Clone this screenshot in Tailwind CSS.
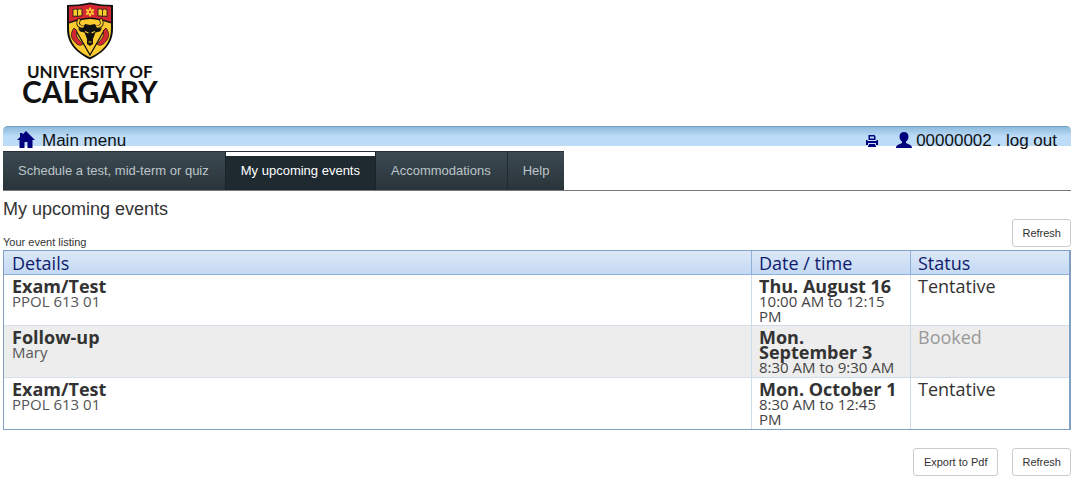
<!DOCTYPE html>
<html lang="en">
<head>
<meta charset="utf-8">
<meta name="viewport" content="width=device-width, initial-scale=1">
<title>My upcoming events</title>
<script src="https://cdn.jsdelivr.net/npm/@tailwindcss/browser@4"></script>
</head>
<body class="bg-white pl-[3px] pr-2 font-['Liberation_Sans',Arial,sans-serif] text-[#333]">
<header>
  <div class="h-[126px] w-max pl-[19px] pt-[2px] font-[Lato,sans-serif] font-bold text-[#111]">
    <svg class="mx-auto block h-[58px] w-[48px]" viewBox="0 0 48 58" role="img" aria-label="University crest">
      <path d="M1 3Q13 3 24 .5Q35 3 47 3V27C47 42 37 51 24 57.500C11 51 1 42 1 27Z" fill="#111"/>
      <path d="M3 4.500Q14 4.500 24 2.300Q34 4.500 45 4.500V20Q34 16 24 15.500Q14 16 3 20Z" fill="#d32732"/>
      <path d="M3 21.500Q14 17.500 24 17Q34 17.500 45 21.500V27C45 41 36.500 49.500 24 55.300C11.500 49.500 3 41 3 27Z" fill="#fccb2f"/>
      <g fill="#fccb2f" stroke="#111" stroke-width=".8">
        <path d="M7 7.500Q9.500 6.500 11.500 7.500Q13.500 6.500 16 7V14Q13.500 13.500 11.500 14.500Q9.500 13.500 7 14.500ZM11.500 7.500V14.500"/>
        <path d="M32 7Q34.500 6.500 36.500 7.500Q38.500 6.500 41 7.500V14.500Q38.500 13.500 36.500 14.500Q34.500 13.500 32 14ZM36.500 7.500V14.500"/>
      </g>
      <g stroke="#fccb2f" stroke-width="2.200" stroke-linecap="round"><path d="M24 6.500V13.500M21 8.200L27 11.800M27 8.200L21 11.800"/></g>
      <circle cx="24" cy="10" r="1.200" fill="#d32732"/>
      <path d="M9 27L24 53L39 27" fill="none" stroke="#111" stroke-width="1.300"/>
      <g fill="#d32732" stroke="#111" stroke-width=".7">
        <path d="M8 26L11 29C9 34 12 37 17 42C14 45 10 42 8 39C4 35 5 30 8 26Z"/>
        <path d="M40 26L37 29C39 34 36 37 31 42C34 45 38 42 40 39C44 35 43 30 40 26Z"/>
      </g>
      <path d="M15 31L24 49L33 31Z" fill="#fccb2f"/>
      <path d="M13 18C10.500 23.500 14 25.500 19 25.500H29C34 25.500 37.500 23.500 35 18" fill="none" stroke="#111" stroke-width="3.400" stroke-linecap="round"/>
      <path d="M13 18C10.500 23.500 14 25 18.500 25M35 18C37.500 23.500 34 25 29.500 25" fill="none" stroke="#fccb2f" stroke-width="1.900" stroke-linecap="round"/>
      <path d="M19 22L24 23L29 22L31 26L36 26.500L34 29.500L29.500 30.500L27 37V42L24 44L21 42V37L18.500 30.500L14 29.500L12 26.500L17 26Z" fill="#111"/>
      <path d="M19 29.500L22.500 31M29 29.500L25.500 31M22.500 40H25.500" stroke="#fccb2f" stroke-width="1.100"/>
    </svg>
    <p class="mt-1 text-center text-[17px] leading-4">UNIVERSITY OF</p>
    <p class="text-center text-[30px] leading-[23px]">CALGARY</p>
  </div>
  <div class="flex h-5 justify-between rounded-t-[5px] border-t border-[#6f9fc0] bg-linear-to-b from-[#8fbbdc] to-[#bcdcf8] to-50% pl-[14px] pr-[14px] text-[17px] leading-7 text-[#111]">
    <a href="#" class="flex h-7 items-center gap-[7px]">
      <svg class="mb-[3px] h-[17px] w-[18px]" viewBox="0 0 18 17" fill="#00007f" aria-hidden="true"><path d="M9 0L18 9H15.500V17H10.500V11H7.500V17H2.500V9H0L3 6V2H5.500V3.500Z"/></svg>
      Main menu</a>
    <div class="flex h-7 items-center">
      <a href="#" aria-label="Print" class="mr-[18px]"><svg class="h-3 w-3" viewBox="0 0 12 12" fill="#00007f" aria-hidden="true"><path fill-rule="evenodd" d="M2.500 0H8.500L9.500 1.500V5H2.500ZM4 1.500V3.500H8V1.500ZM0 5H1.500V6H10.500V5H12V10H10V8H2V10H0ZM3 9H9V10.500H10V12H2V10.500H3Z"/></svg></a>
      <svg class="mb-[3px] mr-1 h-4 w-4" viewBox="0 0 16 16" fill="#00007f" aria-hidden="true"><path d="M8 0C10.800 0 12.500 2 12.500 4.500C12.500 7 11.500 8.500 10 9.500V11C12 12.300 16 12.500 16 16H0C0 12.500 4 12.300 6 11V9.500C4.500 8.500 3.500 7 3.500 4.500C3.500 2 5.200 0 8 0Z"/></svg>
      <span class="whitespace-pre">00000002 . </span><a href="#">log out</a>
    </div>
  </div>
</header>
<nav class="mt-[5px] flex border-b border-[#777] text-[13px] text-[#bcc5c9]" aria-label="Main">
  <div class="flex border-t border-[#293238] bg-linear-to-b from-[#3d4a52] to-[#29343a] leading-[38px]">
    <a href="#" class="pl-[15px] pr-4">Schedule a test, mid-term or quiz</a>
    <a href="#" aria-current="page" class="border-x border-[#18232a] bg-[#1e2930] px-[15px] text-white shadow-[inset_0_4px_0_#fff]">My upcoming events</a>
    <a href="#" class="pl-[15px] pr-4">Accommodations</a>
    <a href="#" class="border-l border-[#202a30] pl-[15px] pr-[15px]">Help</a>
  </div>
</nav>
<main>
  <h1 class="mt-2 text-lg leading-5">My upcoming events</h1>
  <div class="flex items-end justify-between">
    <p class="text-[11px] leading-4">Your event listing</p>
    <button type="button" class="mb-[3px] h-7 rounded-[3px] border border-[#ccc] bg-white px-[9px] text-[11px]">Refresh</button>
  </div>
  <table class="w-full border-separate border-spacing-0 table-fixed border border-r-2 border-[#7f9fc4] font-['Open_Sans','Noto_Sans',sans-serif] text-lg leading-[15px]">
    <thead class="bg-linear-to-b from-[#dce8f8] to-[#c3d8f2] text-left text-[#0d1a6b]">
      <tr class="h-6">
        <th scope="col" class="border-b border-[#8fb0d8] px-2 pt-[2px] font-normal">Details</th>
        <th scope="col" class="w-[159px] border-b border-l border-[#8fb0d8] px-[7px] pt-[2px] font-normal">Date / time</th>
        <th scope="col" class="w-[159px] border-b border-l border-[#8fb0d8] px-[7px] pt-[2px] font-normal">Status</th>
      </tr>
    </thead>
    <tbody class="align-top">
      <tr class="h-[51px]">
        <td class="border-b border-[#d8dfeb] px-2 pt-1"><b>Exam/Test</b><p class="text-[15px] text-[#555]">PPOL 613 01</p></td>
        <td class="border-b border-l border-[#d0dbea] pl-[7px] pr-[10px] pt-1"><b>Thu. August 16</b><p class="text-[15px] text-[#444]">10:00 AM to 12:15 PM</p></td>
        <td class="border-b border-l border-[#d0dbea] px-[7px] pt-1">Tentative</td>
      </tr>
      <tr class="h-[52px] bg-[#ededed]">
        <td class="border-b border-[#d8dfeb] px-2 pt-1"><b>Follow-up</b><p class="text-[15px] text-[#555]">Mary</p></td>
        <td class="border-b border-l border-[#d0dbea] pl-[7px] pr-[10px] pt-1"><b>Mon. September 3</b><p class="text-[15px] text-[#444]">8:30 AM to 9:30 AM</p></td>
        <td class="border-b border-l border-[#d0dbea] px-[7px] pt-1 text-[#999]">Booked</td>
      </tr>
      <tr class="h-[51px]">
        <td class="px-2 pt-1"><b>Exam/Test</b><p class="text-[15px] text-[#555]">PPOL 613 01</p></td>
        <td class="border-l border-[#d0dbea] pl-[7px] pr-[10px] pt-1"><b>Mon. October 1</b><p class="text-[15px] text-[#444]">8:30 AM to 12:45 PM</p></td>
        <td class="border-l border-[#d0dbea] px-[7px] pt-1">Tentative</td>
      </tr>
    </tbody>
  </table>
  <div class="mt-[18px] flex justify-end gap-[14px]">
    <button type="button" class="h-7 rounded-[3px] border border-[#ccc] bg-white px-[10px] text-[11px]">Export to Pdf</button>
    <button type="button" class="h-7 rounded-[3px] border border-[#ccc] bg-white px-[9px] text-[11px]">Refresh</button>
  </div>
</main>
</body>
</html>
